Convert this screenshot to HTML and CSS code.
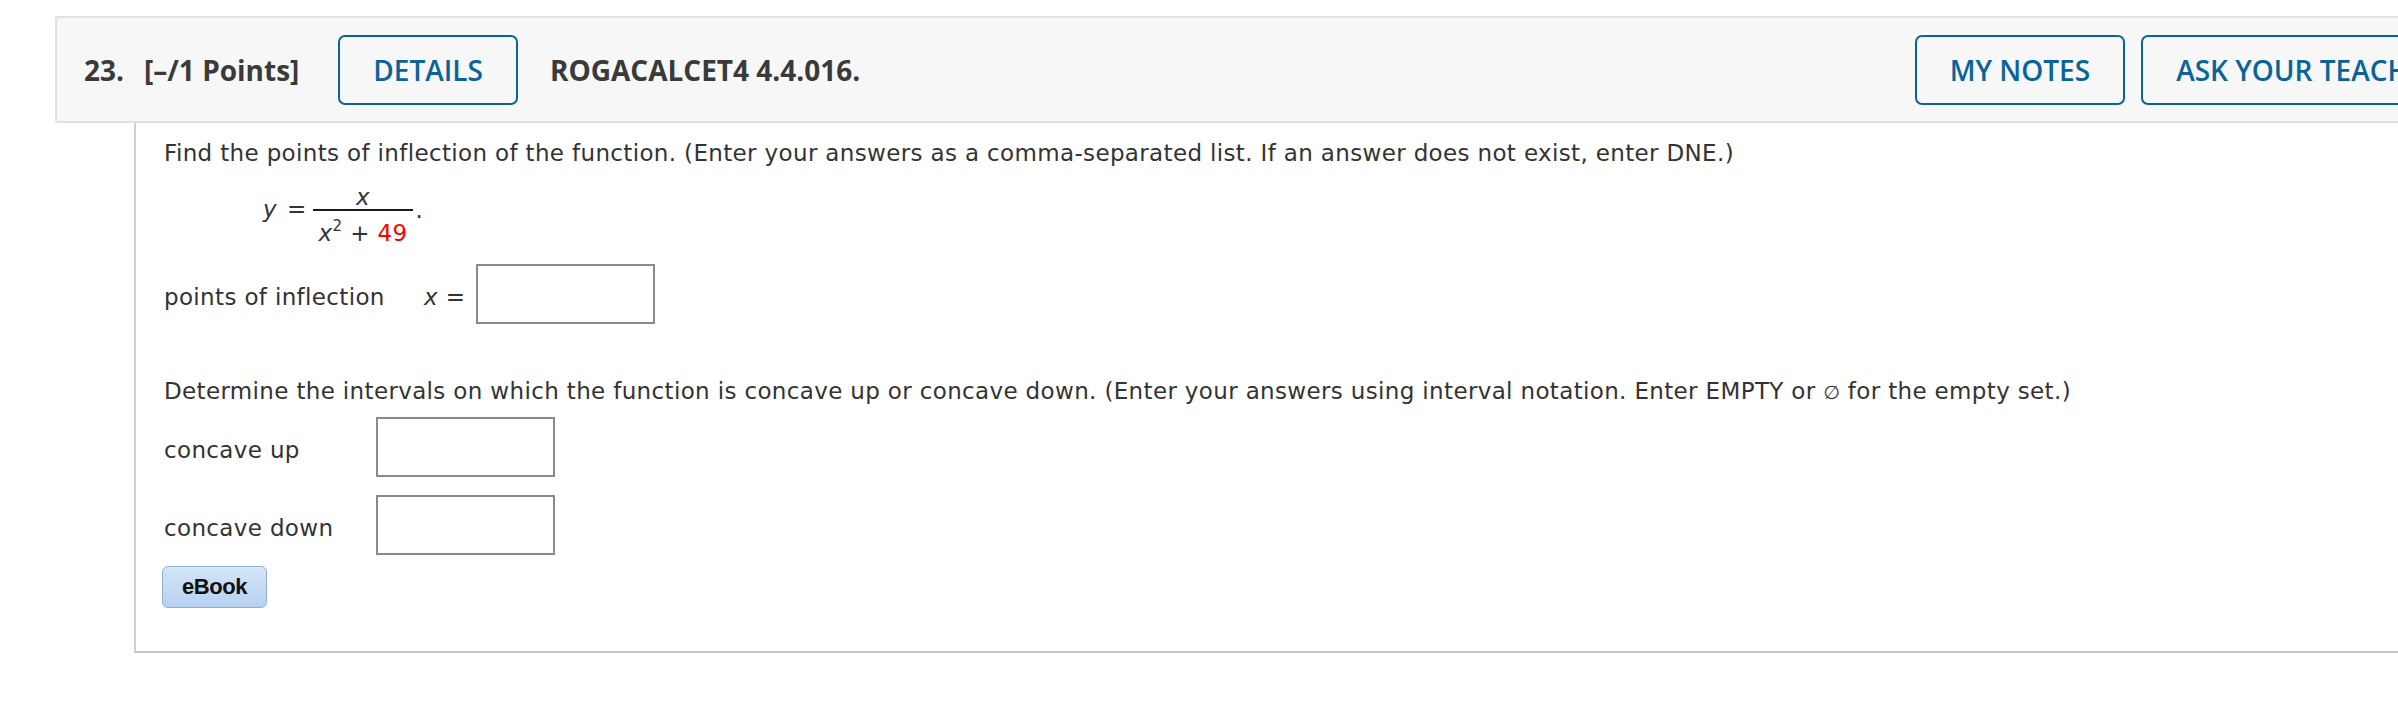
FILE: index.html
```html
<!DOCTYPE html>
<html lang="en">
<head>
<meta charset="utf-8">
<title>Question 23</title>
<link rel="stylesheet" href="styles.css">
</head>
<body>
<div class="page">
  <div class="qhead">
    <span class="qnum">23.</span>
    <span class="qpts">[–/1 Points]</span>
    <button class="hbtn details">DETAILS</button>
    <span class="qid">ROGACALCET4 4.4.016.</span>
    <span class="spacer"></span>
    <button class="hbtn">MY NOTES</button>
    <button class="hbtn">ASK YOUR TEACHER</button>
  </div>
  <div class="qbody">
    <p class="line">Find the points of inflection of the function. (Enter your answers as a comma-separated list. If an answer does not exist, enter DNE.)</p>
    <div class="eq">
      <span class="lhs"><i class="var">y</i><span class="eqs">=</span></span>
      <span class="frac">
        <span class="num"><i class="var">x</i></span>
        <span class="den"><i class="var">x</i><sup class="sup">2</sup> + <span class="red">49</span></span>
      </span>
      <span class="dot">.</span>
    </div>
    <div class="row first">
      <span class="lab lab-poi">points of inflection</span>
      <span class="lab xeq"><i class="var">x</i> =</span>
      <span class="box"></span>
    </div>
    <p class="line second">Determine the intervals on which the function is concave up or concave down. (Enter your answers using interval notation. Enter EMPTY or <span class="empty">∅</span> for the empty set.)</p>
    <div class="row up">
      <span class="lab wide">concave up</span>
      <span class="box"></span>
    </div>
    <div class="row down">
      <span class="lab wide">concave down</span>
      <span class="box"></span>
    </div>
    <button class="ebook">eBook</button>
  </div>
</div>
</body>
</html>
```
FILE: styles.css
```css
html, body {
  margin: 0;
  padding: 0;
  background: #ffffff;
  overflow: hidden;
}
.page {
  padding: 16px 0 0 55px;
  width: 2500px;
}
.qhead {
  box-sizing: border-box;
  width: 2450px;
  height: 107px;
  display: flex;
  align-items: center;
  padding: 0 26px 0 27px;
  background: #f7f7f7;
  border: 2px solid #e1e1e1;
  border-radius: 3px;
  font-family: "Open Sans", "Liberation Sans", sans-serif;
  font-size: 28px;
  font-weight: 700;
  color: #3a3a3a;
}
.qnum { margin-right: 20px; }
.qpts { margin-right: 39px; }
.qid { margin-left: 32px; }
.spacer { flex: 1; }
.hbtn {
  box-sizing: border-box;
  height: 70px;
  padding: 0 33px;
  margin: 0;
  background: transparent;
  border: 2px solid #0b6499;
  border-radius: 7px;
  font-family: "Open Sans", "Liberation Sans", sans-serif;
  font-size: 28px;
  font-weight: 600;
  color: #0b6499;
  white-space: nowrap;
}
.hbtn + .hbtn { margin-left: 16px; }
.qbody {
  margin-left: 79px;
  width: 2380px;
  border-left: 2px solid #d0d0d0;
  border-bottom: 2px solid #c8c8c8;
  padding: 17px 0 43px 28px;
  font-family: "DejaVu Sans", Verdana, sans-serif;
  font-size: 23px;
  letter-spacing: 0.35px;
  line-height: 26px;
  color: #333333;
}
.line { margin: 0; white-space: nowrap; }
.empty { font-size: 19px; }
.var { font-style: italic; }
.eq {
  display: flex;
  align-items: flex-start;
  margin: 19px 0 0 99px;
  line-height: 24px;
}
.lhs { margin-top: 12px; display: flex; }
.eqs { margin-left: 10px; margin-right: 6px; }
.frac {
  display: flex;
  flex-direction: column;
  align-items: stretch;
}
.num {
  text-align: center;
  border-bottom: 2px solid #1a1a1a;
}
.den {
  padding: 10px 6px 0 6px;
  text-align: center;
}
.sup {
  font-size: 15px;
  line-height: 0;
  vertical-align: 10px;
}
.red { color: #ff0000; }
.dot { margin-top: 13px; margin-left: 2px; }
.row {
  display: flex;
  align-items: flex-start;
}
.row.first { margin-top: 19px; }
.row.up { margin-top: 12px; }
.row.down { margin-top: 18px; }
.lab { margin-top: 20px; white-space: nowrap; }
.lab-poi { width: 260px; }
.xeq { width: 52px; }
.wide { width: 212px; }
.box {
  box-sizing: border-box;
  width: 179px;
  height: 60px;
  border: 2px solid #8a8a8a;
  background: #ffffff;
}
.second { margin-top: 54px; }
.ebook {
  display: block;
  box-sizing: border-box;
  margin: 11px 0 0 -2px;
  width: 105px;
  height: 42px;
  padding: 0;
  border: 1px solid #8fb0d9;
  border-radius: 6px;
  background: linear-gradient(#d3e5f8, #b6d1f0);
  box-shadow: inset 0 1px 0 #e4effb;
  font-family: "Liberation Sans", Arial, sans-serif;
  font-size: 22px;
  font-weight: 700;
  letter-spacing: -0.4px;
  color: #111111;
}
```
